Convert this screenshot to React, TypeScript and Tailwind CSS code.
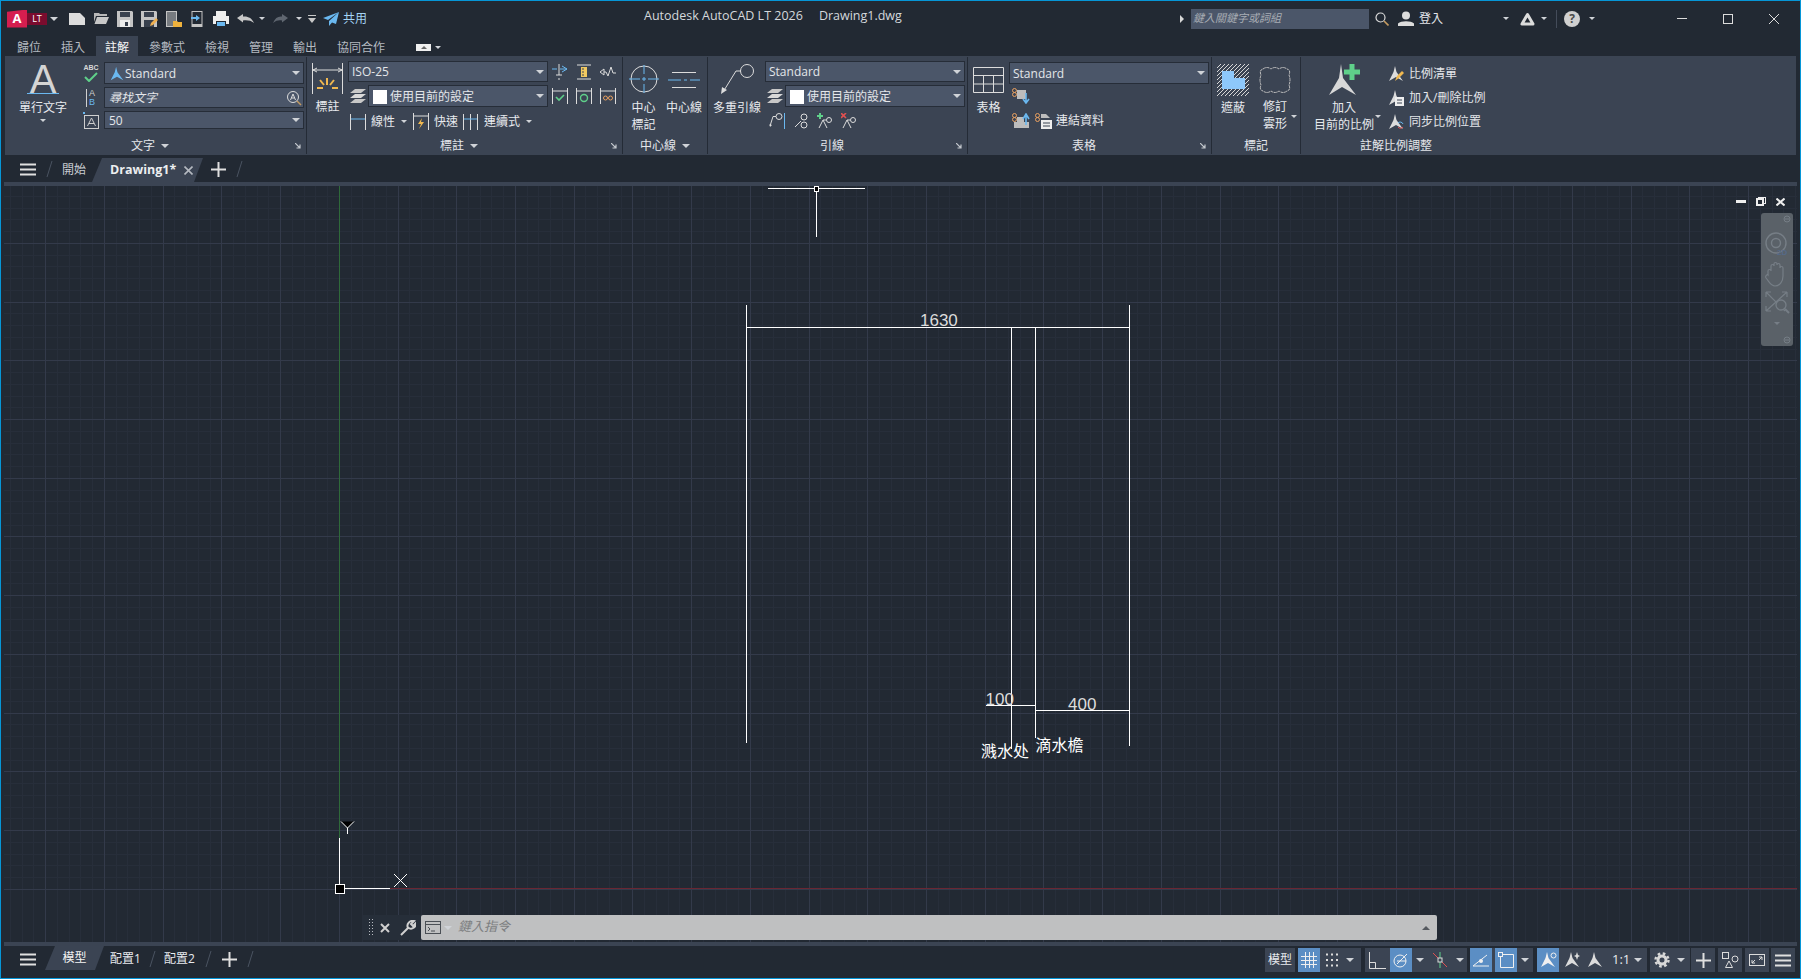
import React from "react";

type P = { className?: string };
const L = "#dcdcdc";
const B = "#6ab8f0";

function Svg({ w, h, className, children }: { w: number; h: number; className?: string; children: React.ReactNode }) {
  return (
    <svg width={w} height={h} viewBox={`0 0 ${w} ${h}`} fill="none" className={`shrink-0 ${className ?? ""}`}>
      {children}
    </svg>
  );
}

function Caret({ className }: P) {
  return <div className={`shrink-0 w-0 h-0 border-x-[4px] border-x-transparent border-t-[4px] border-t-[#d0d3d8] ${className ?? ""}`} />;
}
function SmallCaret({ className }: P) {
  return <div className={`shrink-0 w-0 h-0 border-x-[3px] border-x-transparent border-t-[3px] border-t-[#d0d3d8] ${className ?? ""}`} />;
}

function Slash({ className }: P) {
  return (
    <Svg w={7} h={18} className={className}>
      <path d="M6 1L1 17" stroke="#4a5361" />
    </Svg>
  );
}

function Burger({ className }: P) {
  return (
    <Svg w={16} h={13} className={className}>
      <path d="M0 1.5H16M0 6.5H16M0 11.5H16" stroke="#e0e0e0" strokeWidth="2" />
    </Svg>
  );
}

function Plus({ className }: P) {
  return (
    <Svg w={15} h={15} className={className}>
      <path d="M7.5 0V15M0 7.5H15" stroke="#e0e0e0" strokeWidth="2" />
    </Svg>
  );
}

function Floppy({ pencil }: { pencil?: boolean }) {
  return (
    <>
      <path d="M0 0H15L16 1V16H0Z" fill="#c4c4c4" />
      <rect x="3" y="1" width="10" height="5" fill="#39414e" />
      <rect x="3" y="9" width="10" height="7" fill={pencil ? "#39414e" : "#eeeeee"} />
      <rect x="8" y="11" width="3" height="4" fill="#39414e" />
      {pencil && <path d="M9 15L10 12L15 7L17 9L12 14Z" fill="#f0b050" />}
    </>
  );
}

function ScalePath({ fill = L }: { fill?: string }) {
  return <path d="M7 0L8.5 6L15 15L8 11L1 15L5.5 6Z" fill={fill} />;
}

function Scale({ fill = L, className }: { fill?: string; className?: string }) {
  return (
    <Svg w={16} h={16} className={className}>
      <ScalePath fill={fill} />
    </Svg>
  );
}

function Eight() {
  return (
    <>
      <circle cx="2.5" cy="2.5" r="2" stroke="#e8a060" />
      <circle cx="2.5" cy="6.5" r="2" stroke="#e8a060" />
    </>
  );
}

function Layers({ className }: P) {
  return (
    <Svg w={16} h={15} className={className}>
      <path d="M5 0H16L11 4H0Z" fill="#c8c8c8" />
      <path d="M5 5H16L11 9H0Z" fill="#d8d8d8" />
      <path d="M5 10H16L11 14H0Z" fill="#c8c8c8" />
    </Svg>
  );
}

function CornerArrow({ className }: P) {
  return (
    <Svg w={6} h={6} className={className}>
      <path d="M0 0L5 5M5 1.5V5H1.5" stroke="#c4c8ce" strokeWidth="1.2" />
    </Svg>
  );
}

function Combo({ className, children, caret = true }: { className: string; children?: React.ReactNode; caret?: boolean }) {
  return (
    <div className={`flex items-center shrink-0 pl-[2px] pt-px bg-[#4b5669] border border-[#262d38] text-[#e4e6ea] relative ${className}`}>
      {children}
      {caret && <Caret className="absolute right-[3px] top-1/2 -mt-[2px]" />}
    </div>
  );
}

function CurrentCombo({ className }: P) {
  return (
    <Combo className={`h-[22px] ${className ?? ""}`}>
      <div className="w-[14px] h-[14px] bg-white ml-[2px] mr-[3px]" />
      <span>使用目前的設定</span>
    </Combo>
  );
}

function Panel({ title, className, corner = true, caret = true, children }: {
  title: string;
  className: string;
  corner?: boolean;
  caret?: boolean;
  children: React.ReactNode;
}) {
  return (
    <div className={`shrink-0 my-px border-r border-[#242b36] relative ${className}`}>
      <div className="flex h-[80px]">{children}</div>
      <div className={`h-[17px] flex items-center justify-center gap-[6px] ${corner ? "pr-[11px]" : ""}`}>
        <span className="text-[#e4e6ea]">{title}</span>
        {caret && <Caret />}
      </div>
      {corner && <CornerArrow className="absolute right-[5px] top-[86px]" />}
    </div>
  );
}

function BigLabel({ children }: { children: React.ReactNode }) {
  return <div className="h-[17px] leading-[17px] text-center whitespace-nowrap">{children}</div>;
}

function SideRow({ icon, text }: { icon: React.ReactNode; text: string }) {
  return (
    <div className="flex items-center h-[24px] gap-[5px]">
      {icon}
      <span className="text-[#e4e6ea] whitespace-nowrap">{text}</span>
    </div>
  );
}

// 上方標題列
function TitleBar() {
  return (
    <div className="flex items-center h-[35px] shrink-0">
      <div className="flex items-center w-[643px] shrink-0">
        <div className="ml-[6px] flex items-center w-[40px] h-[18px]">
          <div className="w-[20px] h-[18px] bg-[#d51e4f] text-white text-[13px] font-bold flex items-center justify-center [clip-path:polygon(0_12%,100%_0,100%_100%,0_100%)]">A</div>
          <div className="w-[20px] h-[12px] bg-[#7a0c2e] text-white text-[9px] leading-[12px] text-center">LT</div>
        </div>
        <Caret className="ml-[3px]" />
        <Svg w={16} h={12} className="ml-[11px]"><path d="M0 0H11L16 5V12H0Z" fill={L} /></Svg>
        <Svg w={16} h={13} className="ml-[8px]">
          <path d="M1 1H6L7 2H14V4H3L1 10Z" fill="#b8b8b8" />
          <path d="M4 5H16L13 12H1.5Z" fill="#c8c8c8" />
        </Svg>
        <Svg w={16} h={16} className="ml-[8px]"><Floppy /></Svg>
        <Svg w={17} h={16} className="ml-[8px]"><Floppy pencil /></Svg>
        <Svg w={16} h={16} className="ml-[8px]">
          <rect x="0.5" y="0.5" width="10" height="15" fill="#777b80" stroke="#c4c4c4" />
          <path d="M7 10H11L12 11H16V16H7Z" fill="#efb23d" />
        </Svg>
        <Svg w={12} h={16} className="ml-[9px]">
          <rect x="1" y="0.5" width="10" height="15" stroke="#c4c4c4" />
          <rect x="1" y="13" width="10" height="2.5" fill="#c4c4c4" />
          <path d="M0 6H5V4L9 7L5 10V8H0Z" fill={B} />
        </Svg>
        <Svg w={16} h={16} className="ml-[10px]">
          <rect x="3" y="0" width="10" height="5" fill="#eeeeee" />
          <path d="M0 5H16V13H13V10H3V13H0Z" fill="#eeeeee" />
          <rect x="4" y="11" width="8" height="4" fill={B} />
        </Svg>
        <Svg w={17} h={9} className="ml-[8px]"><path d="M0 4L6 0V2.5C11 2 15 4 17 9C14 6.5 10 6 6 6.5V8.5Z" fill="#c8c8c8" /></Svg>
        <SmallCaret className="ml-[5px]" />
        <Svg w={15} h={9} className="ml-[8px]"><path d="M15 4L9 0V2.5C5 2 2 4 0 9C3 6.5 6 6 9 6.5V8.5Z" fill="#5f6670" /></Svg>
        <SmallCaret className="ml-[8px]" />
        <Svg w={8} h={8} className="ml-[6px]">
          <path d="M0 0.5H8" stroke="#c8c8c8" />
          <path d="M0 3H8L4 8Z" fill="#c8c8c8" />
        </Svg>
        <Svg w={16} h={14} className="ml-[7px]">
          <path d="M16 0L0 6L5 8ZM16 0L6 9L6 14L9 10.5L13 12Z" fill={B} />
        </Svg>
        <span className="ml-[4px] text-[#a4d4f4]">共用</span>
      </div>
      <div className="flex items-center w-[536px] shrink-0 -mt-[5px] text-[#d4d8dc] text-[12.5px] whitespace-nowrap">
        <span>Autodesk AutoCAD LT 2026</span>
        <span className="ml-[16px]">Drawing1.dwg</span>
      </div>
      <div className="flex items-center flex-1">
        <div className="shrink-0 w-0 h-0 border-y-[4px] border-y-transparent border-l-[4px] border-l-[#d8d8d8]" />
        <div className="ml-[7px] w-[178px] h-[20px] bg-[#4b5669] flex items-center pl-[2px] text-[11px] italic text-[#a8adb4]">鍵入關鍵字或詞組</div>
        <Svg w={14} h={14} className="ml-[6px]">
          <circle cx="5.5" cy="5.5" r="4.5" stroke={L} strokeWidth="1.2" />
          <path d="M9 9L13.5 13.5" stroke="#c49a60" strokeWidth="1.6" />
        </Svg>
        <Svg w={16} h={15} className="ml-[9px]">
          <circle cx="8" cy="4.5" r="4" fill={L} />
          <path d="M0 15V12.5C3 9.5 13 9.5 16 12.5V15Z" fill={L} />
        </Svg>
        <span className="ml-[5px] w-[24px] text-[#e4e6ea]">登入</span>
        <SmallCaret className="ml-[60px]" />
        <Svg w={15} h={14} className="ml-[11px]">
          <path d="M7.5 2.5L2 12H13Z" stroke={L} strokeWidth="3" strokeLinejoin="round" />
        </Svg>
        <SmallCaret className="ml-[6px]" />
        <div className="ml-[9px] w-px h-[18px] bg-[#444c5a]" />
        <div className="ml-[7px] w-[16px] h-[16px] rounded-full bg-[#d0d0d0] text-[#4a4a4a] text-[12px] font-bold leading-[16px] text-center">?</div>
        <SmallCaret className="ml-[9px]" />
        <Svg w={10} h={2} className="ml-[82px]"><rect width="10" height="1" fill={L} /></Svg>
        <Svg w={10} h={10} className="ml-[36px]"><rect x="0.5" y="0.5" width="9" height="9" stroke={L} /></Svg>
        <Svg w={10} h={10} className="ml-[36px]"><path d="M0 0L10 10M10 0L0 10" stroke={L} /></Svg>
      </div>
    </div>
  );
}

function RibbonTabs() {
  const tabs = ["歸位", "插入", "註解", "參數式", "檢視", "管理", "輸出", "協同合作"];
  return (
    <div className="flex items-stretch h-[20px] shrink-0 ml-[7px] gap-[2px]">
      {tabs.map((t) => (
        <div
          key={t}
          className={t === "註解"
            ? "px-[9px] pt-[3px] flex items-center bg-[#3b4453] text-[#f4f4f4]"
            : "px-[9px] pt-[3px] flex items-center text-[#b4b9c0]"}
        >
          {t}
        </div>
      ))}
      <div className="ml-[20px] self-center mt-[2px] w-[15px] h-[7px] bg-[#f0f0f0] flex items-center justify-center">
        <div className="w-0 h-0 border-x-[3px] border-x-transparent border-b-[3px] border-b-[#666]" />
      </div>
      <SmallCaret className="ml-[2px] mt-[2px] self-center" />
    </div>
  );
}

function Ribbon() {
  const hatch = [4, 8, 12, 16, 20, 24, 28, 32, 36, 40, 44, 48, 52, 56, 60];
  return (
    <div className="flex shrink-0 ml-[4px] w-[1791px] h-[99px] bg-[#3b4453] text-[#e8eaee]">
      {/* 文字 */}
      <Panel title="文字" className="w-[302px]">
        <div className="w-[76px] flex flex-col items-center">
          <div className="h-[37px] w-[32px] border-b border-[#6ab8f0] text-[#d4d4d4] text-[40px] leading-[44px] text-center font-['Liberation_Sans',sans-serif]">A</div>
          <div className="mt-[5px]"><BigLabel>單行文字</BigLabel></div>
          <SmallCaret className="mt-[3px]" />
        </div>
        <div className="flex flex-col pt-[5px] gap-[3px]">
          <div className="flex items-center">
            <div className="w-[23px] h-[18px] flex flex-col items-center pr-[3px] relative">
              <span className="text-[7px] leading-[7px] font-bold text-[#d8d8d8] font-['Liberation_Sans',sans-serif]">ABC</span>
              <Svg w={14} h={10} className="mt-px">
                <path d="M1 5L5 9L13 1" stroke="#5fd08a" strokeWidth="2" />
              </Svg>
            </div>
            <Combo className="w-[200px] h-[22px]">
              <Scale fill={B} className="ml-[2px] scale-90" />
              <span>Standard</span>
            </Combo>
          </div>
          <div className="flex items-center">
            <div className="w-[23px] flex flex-col pl-[5px] text-[9px] leading-[9px] font-['Liberation_Sans',sans-serif]">
              <span className="border-l border-[#d0d0d0] pl-[2px] text-[#d0d0d0]">A</span>
              <span className="border-l border-[#d0d0d0] pl-[2px] text-[#6ab8f0]">B</span>
            </div>
            <Combo caret={false} className="w-[200px] h-[21px] italic text-[#a8adb4]">
              <span className="ml-[2px]">尋找文字</span>
              <Svg w={16} h={16} className="absolute right-[1px] top-[2px]">
                <circle cx="7" cy="7" r="5.5" stroke={L} />
                <path d="M4.5 10L7 4L9.5 10M5.5 8H8.5" stroke={L} />
                <path d="M11 11L15 15" stroke="#c49a60" strokeWidth="1.5" />
              </Svg>
            </Combo>
          </div>
          <div className="flex items-center">
            <Svg w={17} h={17} className="ml-[2px] mr-[4px]">
              <rect x="1.5" y="3.5" width="14" height="13" stroke="#cfcfcf" />
              <rect x="0" y="0" width="2" height="2" fill={B} />
              <path d="M4.5 14L8.5 6L12.5 14M6 11.5H11" stroke="#cfcfcf" />
            </Svg>
            <Combo className="w-[200px] h-[18px]"><span className="ml-[2px]">50</span></Combo>
          </div>
        </div>
      </Panel>

      {/* 標註 */}
      <Panel title="標註" className="w-[316px]">
        <div className="w-[41px] flex flex-col items-center">
          <Svg w={31} h={32} className="mt-[6px]">
            <path d="M0.5 0V31M30.5 0V31" stroke={L} />
            <path d="M1 7H30M1 7L5 5M1 7L5 9M30 7L26 5M30 7L26 9" stroke={L} />
            <path d="M15 15V22M8 17L12 22M22 17L18 22M5 25H11M20 25H26" stroke="#f0b850" strokeWidth="2" />
          </Svg>
          <div className="mt-[3px]"><BigLabel>標註</BigLabel></div>
        </div>
        <div className="flex flex-col pt-[4px]">
          <div className="flex items-center">
            <Combo className="w-[200px] h-[21px]"><span className="ml-[1px]">ISO-25</span></Combo>
            <Svg w={16} h={16} className="ml-[4px]">
              <path d="M0 5H5M8 5H15M10 2L15 5L10 8" stroke={B} />
              <path d="M7 0V11M4 11H10M7 14V16" stroke={L} />
            </Svg>
            <Svg w={16} h={16} className="ml-[8px]">
              <path d="M1 1H15M1 15H15" stroke={L} />
              <rect x="5" y="3" width="6" height="10" fill="#f0c860" />
              <path d="M6 5H8M6 8H8M6 11H8" stroke="#3b4453" />
            </Svg>
            <Svg w={16} h={16} className="ml-[8px]">
              <path d="M0 8L4 5V11ZM4 8H6L8 12L11 3L13 9H16" stroke={L} />
            </Svg>
          </div>
          <div className="flex items-center mt-[3px]">
            <Layers className="ml-[2px] mr-[2px]" />
            <CurrentCombo className="w-[180px]" />
            <Svg w={16} h={16} className="ml-[4px]">
              <path d="M0.5 0V16M15.5 0V16M1 3H15" stroke={L} />
              <path d="M4 9L7 12L12 7" stroke="#5fd08a" strokeWidth="1.6" />
            </Svg>
            <Svg w={16} h={16} className="ml-[8px]">
              <path d="M0.5 0V16M15.5 0V16M1 3H15" stroke={L} />
              <circle cx="8" cy="10" r="3.5" stroke="#5fd08a" strokeWidth="1.4" />
            </Svg>
            <Svg w={16} h={16} className="ml-[8px]">
              <path d="M0.5 0V16M15.5 0V16M1 3H15" stroke={L} />
              <circle cx="5.5" cy="10" r="2" stroke="#e8a060" />
              <circle cx="10.5" cy="10" r="2" stroke="#e8a060" />
            </Svg>
          </div>
          <div className="flex items-center mt-[6px] ml-[2px] h-[17px]">
            <Svg w={16} h={16}><path d="M0.5 0V16M15.5 0V16" stroke={L} /><path d="M1 5H15" stroke={B} /></Svg>
            <span className="ml-[5px]">線性</span>
            <SmallCaret className="ml-[6px]" />
            <Svg w={16} h={17} className="ml-[6px]">
              <path d="M0.5 0V17M15.5 0V17M1 3H15" stroke={L} />
              <path d="M9 5L5 11H8L6 16L11 9H8Z" fill="#f0b850" />
            </Svg>
            <span className="ml-[5px]">快速</span>
            <Svg w={15} h={16} className="ml-[5px]">
              <path d="M0.5 0V16M7.5 0V16M14.5 0V16" stroke={L} />
              <path d="M1 5H14" stroke={B} />
            </Svg>
            <span className="ml-[6px]">連續式</span>
            <SmallCaret className="ml-[6px]" />
          </div>
        </div>
      </Panel>

      {/* 中心線 */}
      <Panel title="中心線" className="w-[85px]" corner={false}>
        <div className="w-[41px] flex flex-col items-center">
          <Svg w={30} h={28} className="mt-[8px]">
            <circle cx="15" cy="14" r="13" stroke={L} />
            <path d="M15 0V9M15 19V28M0 14H11M19 14H30" stroke={B} />
            <path d="M15 12V16M13 14H17" stroke={B} />
          </Svg>
          <div className="mt-[6px]">
            <BigLabel>中心</BigLabel>
            <BigLabel>標記</BigLabel>
          </div>
        </div>
        <div className="w-[40px] flex flex-col items-center">
          <Svg w={32} h={16} className="mt-[15px]">
            <path d="M4 0.5H28M4 15.5H28" stroke={L} />
            <path d="M0 8H13M16 8H19M22 8H32" stroke={B} />
          </Svg>
          <div className="mt-[11px]"><BigLabel>中心線</BigLabel></div>
        </div>
      </Panel>

      {/* 引線 */}
      <Panel title="引線" className="w-[260px]" caret={false}>
        <div className="ml-[4px] w-[50px] flex flex-col items-center">
          <Svg w={33} h={30} className="mt-[7px]">
            <circle cx="26" cy="7" r="6.5" stroke={L} />
            <path d="M20 7H15L2 28" stroke={L} />
            <path d="M0 30L1 23L6 26Z" fill={L} />
          </Svg>
          <div className="mt-[5px]"><BigLabel>多重引線</BigLabel></div>
        </div>
        <div className="ml-[3px] flex flex-col pt-[4px]">
          <Combo className="w-[200px] h-[21px]"><span className="ml-[1px]">Standard</span></Combo>
          <div className="flex items-center mt-[3px]">
            <Layers className="ml-[2px] mr-[2px]" />
            <CurrentCombo className="w-[180px]" />
          </div>
          <div className="flex items-center mt-[6px] ml-[4px] gap-[8px]">
            <Svg w={16} h={16}><circle cx="10" cy="3.5" r="3" stroke={L} /><path d="M7 3.5H4L1 13" stroke={L} /><path d="M1 14L0.5 11L3 12Z" fill={L} /><path d="M15.5 0V16" stroke={B} /></Svg>
            <Svg w={16} h={16}><circle cx="11" cy="4" r="3" stroke={L} /><circle cx="11" cy="12" r="3" stroke={L} /><path d="M8 8L2 14" stroke={L} /></Svg>
            <Svg w={16} h={16}><path d="M0 3H6M3 0V6" stroke="#5fd08a" strokeWidth="2" /><circle cx="12" cy="7" r="2.5" stroke={L} /><path d="M9 7H6L2 15M6 7L10 15" stroke={L} /></Svg>
            <Svg w={16} h={16}><path d="M0 0L5 5M5 0L0 5" stroke="#e05050" strokeWidth="1.6" /><circle cx="12" cy="7" r="2.5" stroke={L} /><path d="M9 7H6L2 15M6 7L10 15" stroke={L} /></Svg>
          </div>
        </div>
      </Panel>

      {/* 表格 */}
      <Panel title="表格" className="w-[244px]" caret={false}>
        <div className="ml-[2px] w-[37px] flex flex-col items-center">
          <Svg w={31} h={26} className="mt-[10px]">
            <path d="M0.5 0.5H30.5V25.5H0.5ZM0.5 8.5H30.5M0.5 17H30.5M10.5 8.5V25.5M20.5 8.5V25.5" stroke={L} />
          </Svg>
          <div className="mt-[6px]"><BigLabel>表格</BigLabel></div>
        </div>
        <div className="ml-[2px] flex flex-col pt-[5px]">
          <Combo className="w-[200px] h-[22px]"><span className="ml-[1px]">Standard</span></Combo>
          <Svg w={18} h={16} className="ml-[3px] mt-[4px]">
            <Eight />
            <rect x="5" y="2" width="9" height="9" fill="#bdbdbd" />
            <path d="M14 5V14M11 11L14 15L17 11" stroke={B} strokeWidth="1.6" />
          </Svg>
          <div className="flex items-center ml-[3px] mt-[8px]">
            <Svg w={18} h={16}>
              <Eight />
              <rect x="2" y="9" width="15" height="6" fill="#bdbdbd" />
              <rect x="5" y="4" width="7" height="6" fill="#bdbdbd" />
              <path d="M14 12V3M11 6L14 1L17 6" stroke={B} strokeWidth="1.6" />
            </Svg>
            <Svg w={17} h={16} className="ml-[5px]">
              <Eight />
              <path d="M6 1H11L15 5H6Z" fill="#bdbdbd" />
              <rect x="6" y="7" width="11" height="9" fill="#eeeeee" />
              <path d="M8 10H15M8 13H15" stroke="#3b4453" />
            </Svg>
            <span className="ml-[4px]">連結資料</span>
          </div>
        </div>
      </Panel>

      {/* 標記 */}
      <Panel title="標記" className="w-[89px]" corner={false} caret={false}>
        <div className="w-[42px] flex flex-col items-center">
          <Svg w={32} h={32} className="mt-[7px]">
            {hatch.map((h) => <path key={h} d={`M0 ${h}L${h} 0`} stroke="#d8d8d8" />)}
            <path d="M5 7H17V14H28V25H5Z" fill="#8ec8fb" />
          </Svg>
          <div className="mt-[3px]"><BigLabel>遮蔽</BigLabel></div>
        </div>
        <div className="w-[42px] flex flex-col items-center relative">
          <Svg w={32} h={26} className="mt-[10px]">
            <path d="M4 2Q8 -1 12 2Q16 -1 20 2Q24 -1 28 2Q32 3 30 8Q32 13 30 18Q32 23 28 24Q24 27 20 24Q16 27 12 24Q8 27 4 24Q0 23 2 18Q0 13 2 8Q0 3 4 2Z" stroke="#bdbdbd" strokeDasharray="3 0.6" />
          </Svg>
          <div className="mt-[5px]">
            <BigLabel>修訂</BigLabel>
            <BigLabel>雲形</BigLabel>
          </div>
          <SmallCaret className="absolute right-[-1px] top-[58px]" />
        </div>
      </Panel>

      {/* 註解比例調整 */}
      <Panel title="註解比例調整" className="w-[190px] border-r-0" corner={false} caret={false}>
        <div className="w-[86px] flex flex-col items-center relative">
          <Svg w={32} h={32} className="mt-[7px]">
            <path d="M13 0L15 14L28 31L14 23L1 31L11 14Z" fill="#d8d8d8" />
            <path d="M16 5.5H32V10.5H16ZM21.5 0H26.5V16H21.5Z" fill="#5fd08a" />
          </Svg>
          <div className="mt-[3px]">
            <BigLabel>加入</BigLabel>
            <BigLabel>目前的比例</BigLabel>
          </div>
          <SmallCaret className="absolute right-[6px] top-[58px]" />
        </div>
        <div className="ml-px flex flex-col pt-[5px]">
          <SideRow icon={<Svg w={16} h={16}><ScalePath /><path d="M7 15L9 10L14 5L16 7L11 12Z" fill="#f0b850" /></Svg>} text="比例清單" />
          <SideRow icon={<Svg w={16} h={16}><ScalePath /><rect x="7" y="7" width="9" height="9" fill="#eeeeee" /><path d="M9 10H14M9 13H14" stroke="#3b4453" /></Svg>} text="加入/刪除比例" />
          <SideRow icon={<Svg w={16} h={16}><ScalePath /><path d="M10 9A3 3 0 0 1 15 10" stroke={B} /><path d="M15 13A3 3 0 0 1 10 13" stroke="#e05050" /></Svg>} text="同步比例位置" />
        </div>
      </Panel>
    </div>
  );
}

function DocTabs() {
  return (
    <div className="flex items-center h-[27px] shrink-0 text-[#e8eaee]">
      <Burger className="ml-[19px] mt-px" />
      <Slash className="ml-[10px]" />
      <span className="ml-[9px] pt-[2px] text-[#c8ccd2]">開始</span>
      <div className="ml-[6px] self-end flex items-center w-[111px] h-[24px] pl-[18px] bg-[#3b4453] font-bold text-[#eceef0] text-[12.5px] [clip-path:polygon(10px_0,100%_0,calc(100%-9px)_100%,0_100%)]">
        <span>Drawing1*</span>
        <Svg w={9} h={9} className="ml-[8px]"><path d="M0.5 0.5L8.5 8.5M8.5 0.5L0.5 8.5" stroke="#b4b9c0" strokeWidth="1.6" /></Svg>
      </div>
      <Plus className="ml-[8px] mt-px" />
      <Slash className="ml-[10px]" />
    </div>
  );
}

// 繪圖區
function Drawing() {
  const step = 58.72 / 5;
  const xs = Array.from({ length: 160 }, (_, i) => ({ v: 339.3 + (i - 30) * step, major: (i - 30) % 5 === 0 })).filter((l) => l.v > 4 && l.v < 1797);
  const ys = Array.from({ length: 70 }, (_, i) => ({ v: 889.3 - i * step, major: i % 5 === 0 })).filter((l) => l.v > 186 && l.v < 942);
  const snap = (v: number) => Math.floor(v) + 0.5;
  return (
    <svg className="absolute inset-0 w-full h-full" viewBox="1 186 1799 756" shapeRendering="crispEdges">
      <rect x="4" y="186" width="1793" height="756" fill="#222933" />
      {xs.filter((l) => !l.major).map((l) => <path key={`x${l.v}`} d={`M${snap(l.v)} 186V942`} stroke="#272e3a" />)}
      {ys.filter((l) => !l.major).map((l) => <path key={`y${l.v}`} d={`M4 ${snap(l.v)}H1797`} stroke="#272e3a" />)}
      {xs.filter((l) => l.major).map((l) => <path key={`X${l.v}`} d={`M${snap(l.v)} 186V942`} stroke="#333a4a" />)}
      {ys.filter((l) => l.major).map((l) => <path key={`Y${l.v}`} d={`M4 ${snap(l.v)}H1797`} stroke="#333a4a" />)}
      {/* 座標軸 */}
      <path d="M339.5 186V838" stroke="#2f6a3a" />
      <path d="M390 888.5H1797" stroke="#6a2733" />
      <g stroke="#ffffff">
        <path d="M339.5 838V884M345 888.5H390" />
        <rect x="335.5" y="884.5" width="9" height="9" />
      </g>
      <g stroke="#ffffff" shapeRendering="auto">
        <path d="M341 821.5L347.5 828L354 821.5M347.5 828V834M394 874L407 887M407 874L394 887" />
      </g>
      {/* 十字游標 */}
      <g stroke="#ffffff">
        <path d="M768 188.5H865M816.5 192V237" />
        <rect x="814.5" y="186.5" width="4" height="5" />
      </g>
      {/* 標註 */}
      <g stroke="#ffffff">
        <path d="M746.5 305V743M1129.5 305V746M746 327.5H1129.5M1011.5 327V749M1035.5 327V738M986 705.5H1035.5M1035.5 710.5H1129.5" />
      </g>
      <g fill="#dcdcdc" fontFamily="'Liberation Sans', sans-serif" fontSize="17" shapeRendering="auto">
        <text x="920" y="326">1630</text>
        <text x="985.5" y="705">100</text>
        <text x="1068" y="710">400</text>
      </g>
      <g fill="#ffffff" fontFamily="'Noto Sans CJK SC', sans-serif" fontSize="16">
        <text x="981" y="757">溅水处</text>
        <text x="1035.5" y="751">滴水檐</text>
      </g>
    </svg>
  );
}

function ViewportControls() {
  return (
    <div className="absolute left-[1735px] top-[11px] flex items-center">
      <Svg w={10} h={3}><rect width="10" height="3" fill="#eeeeee" /></Svg>
      <Svg w={10} h={9} className="ml-[10px]">
        <rect x="2.5" y="0.5" width="7" height="6" stroke="#eeeeee" />
        <rect x="1" y="2" width="6" height="6" fill="#222933" stroke="#eeeeee" strokeWidth="2" />
      </Svg>
      <Svg w={9} h={8} className="ml-[10px]"><path d="M0.5 0.5L8.5 7.5M8.5 0.5L0.5 7.5" stroke="#eeeeee" strokeWidth="2" /></Svg>
    </div>
  );
}

function NavBar() {
  const c = "#767e86";
  return (
    <div className="absolute left-[1760px] top-[27px] w-[32px] h-[133px] rounded-[3px] bg-[#5a6168] flex flex-col items-center">
      <Svg w={32} h={133}>
        <circle cx="26" cy="6" r="3" stroke={c} />
        <path d="M24 6H28" stroke={c} />
        <circle cx="15" cy="30" r="10" stroke={c} strokeWidth="1.4" />
        <circle cx="15" cy="30" r="4.5" stroke={c} strokeWidth="1.4" />
        <path d="M7 62V58C7 56 10 56 10 58V53C10 51 13 51 13 53V51C13 49 16 49 16 51V52C16 50 19 50 19 52V55C19 53 22 53 22 55V63C22 68 19 73 14 73C10 73 9 70 5 65C4 63 6 61 7 62Z" stroke={c} strokeWidth="1.2" />
        <path d="M5 79L24 98M26 79L5 98M5 79H10M5 79V84M26 79H21M26 79V84M5 98V93M5 98H10" stroke={c} strokeWidth="1.2" />
        <circle cx="20" cy="92" r="5" fill="#5a6168" stroke={c} strokeWidth="1.3" />
        <path d="M24 96L28 100" stroke={c} strokeWidth="2" />
        <path d="M13 109H19L16 112Z" fill={c} />
        <circle cx="26" cy="127" r="3" stroke={c} />
        <path d="M24 127H28" stroke={c} />
      </Svg>
      <span className="absolute left-[16px] top-[34px] text-[8px] font-bold text-[#556a88] font-['Liberation_Sans',sans-serif]">2D</span>
    </div>
  );
}

function CommandLine() {
  return (
    <div className="absolute left-[362px] top-[729px] flex h-[25px] w-[1074px]">
      <div className="flex items-center w-[58px] bg-[#262e39]">
        <div className="ml-[5px] w-[5px] h-[19px] [background-image:radial-gradient(#b8bcc2_1px,transparent_1px)] [background-size:3px_3px]" />
        <Svg w={10} h={10} className="ml-[7px]"><path d="M1 1L9 9M9 1L1 9" stroke="#d0d0d0" strokeWidth="2" /></Svg>
        <Svg w={16} h={16} className="ml-[10px]">
          <path d="M1 15L9 7M8 8C6 4 10 0 14 1L11 4L13 6L16 3C16 7 12 10 9 8" stroke="#d0d0d0" strokeWidth="2" />
        </Svg>
      </div>
      <div className="flex-1 flex items-center bg-[#bfc0c1] rounded-[2px] relative">
        <Svg w={16} h={13} className="ml-[4px]">
          <rect x="0.5" y="0.5" width="15" height="12" stroke="#4a4f55" />
          <path d="M0 3.5H16" stroke="#4a4f55" />
          <path d="M3 6L5 8L3 10M6 10H10" stroke="#4a4f55" />
        </Svg>
        <Caret className="ml-[3px] border-t-[#4a4f55]" />
        <span className="ml-[6px] -mt-[2px] italic text-[13px] text-[#7c7e80]">鍵入指令</span>
        <div className="absolute right-[7px] top-[11px] w-0 h-0 border-x-[4px] border-x-transparent border-b-[4px] border-b-[#55595f]" />
      </div>
    </div>
  );
}

function StatusBox({ className, children }: { className?: string; children: React.ReactNode }) {
  return <div className={`flex items-center h-[24px] bg-[#3b4453] shrink-0 ${className ?? ""}`}>{children}</div>;
}
function On({ children }: { children: React.ReactNode }) {
  return <div className="w-[22px] h-[24px] bg-[#5b8ec4] flex items-center justify-center shrink-0">{children}</div>;
}

function StatusBar() {
  const w = "#f0f0f0";
  return (
    <div className="flex justify-between h-[32px] shrink-0 text-[#e8eaee]">
      <div className="flex items-center">
        <Burger className="ml-[19px] -mt-[6px]" />
        <div className="ml-[9px] self-start w-[59px] h-[24px] bg-[#3b4453] flex items-center justify-center text-[#f4f4f4] [clip-path:polygon(10px_0,100%_0,calc(100%-9px)_100%,0_100%)]">模型</div>
        <div className="flex items-center -mt-[6px] whitespace-nowrap">
          <span className="ml-[6px] w-[33px]">配置1</span>
          <Slash className="ml-[6px]" />
          <span className="ml-[8px] w-[33px]">配置2</span>
          <Slash className="ml-[8px]" />
          <Plus className="ml-[10px]" />
          <Slash className="ml-[10px]" />
        </div>
      </div>
      <div className="flex items-start pt-[2px] mr-[5px]">
        <StatusBox className="w-[30px] justify-center">模型</StatusBox>
        <StatusBox className="ml-[3px] w-[63px]">
          <On><Svg w={16} h={16}><path d="M0 4.5H16M0 8.5H16M0 12.5H16M4.5 0V16M8.5 0V16M12.5 0V16" stroke={w} /></Svg></On>
          <Svg w={14} h={14} className="ml-[5px]">
            <path d="M1 1.5H3M6 1.5H8M11 1.5H13M1 7H3M6 7H8M11 7H13M1 12.5H3M6 12.5H8M11 12.5H13" stroke={L} strokeWidth="2" />
          </Svg>
          <Caret className="ml-[7px]" />
        </StatusBox>
        <StatusBox className="ml-[4px] w-[102px]">
          <Svg w={17} h={17} className="ml-[4px]">
            <path d="M0.5 0V16.5H17M0.5 10.5H6.5V16.5" stroke={L} />
          </Svg>
          <div className="ml-[4px]">
            <On>
              <Svg w={16} h={16}>
                <circle cx="7" cy="9" r="6" stroke={w} />
                <path d="M4 12L14 2M4 9H13" stroke={w} />
              </Svg>
            </On>
          </div>
          <Caret className="ml-[4px]" />
          <Svg w={14} h={16} className="ml-[9px]">
            <path d="M0 1L14 15" stroke="#e05050" />
            <path d="M7 0V16" stroke="#5fd08a" />
            <rect x="5" y="6" width="4" height="4" fill="#3b4453" stroke={L} />
          </Svg>
          <Caret className="ml-[9px]" />
        </StatusBox>
        <StatusBox className="ml-[3px] w-[63px]">
          <On><Svg w={16} h={16}><path d="M0 14H16M0 14L14 3" stroke={w} /><circle cx="8" cy="9" r="2" fill={w} /></Svg></On>
          <div className="ml-[3px]">
            <On>
              <Svg w={16} h={16}>
                <path d="M2.5 4V15.5H15.5V2.5H4.5" stroke={w} />
                <rect x="0.5" y="0.5" width="4" height="4" stroke={w} />
              </Svg>
            </On>
          </div>
          <Caret className="ml-[4px]" />
        </StatusBox>
        <StatusBox className="ml-[4px] w-[110px]">
          <On>
            <Svg w={17} h={16}>
              <ScalePath fill={w} />
              <circle cx="13.5" cy="3.5" r="2.5" stroke={w} />
            </Svg>
          </On>
          <Svg w={16} h={16} className="ml-[5px]">
            <ScalePath />
            <path d="M13 0L14 3L16 4L14 5L13 8L12 5L10 4L12 3Z" fill={L} />
          </Svg>
          <Scale className="ml-[7px]" />
          <span className="ml-[9px] text-[13px] font-['Open_Sans',sans-serif]">1:1</span>
          <Caret className="ml-[4px]" />
        </StatusBox>
        <StatusBox className="ml-[3px] w-[40px]">
          <Svg w={16} h={16} className="ml-[4px]">
            <circle cx="8" cy="8" r="4" stroke="#d8d8d8" strokeWidth="3" />
            <circle cx="8" cy="8" r="6.5" stroke="#d8d8d8" strokeWidth="2.4" strokeDasharray="2.6 2.5" />
          </Svg>
          <Caret className="ml-[7px]" />
        </StatusBox>
        <StatusBox className="ml-px w-[24px] justify-center">
          <Plus />
        </StatusBox>
        <StatusBox className="ml-[3px] w-[24px] justify-center">
          <Svg w={17} h={17}>
            <rect x="0.5" y="0.5" width="6" height="6" stroke={L} />
            <circle cx="13" cy="7" r="3" stroke={L} />
            <path d="M7 9L3.5 15.5H10.5Z" stroke={L} />
          </Svg>
        </StatusBox>
        <StatusBox className="ml-[3px] w-[24px] justify-center">
          <Svg w={16} h={12}>
            <rect x="0.5" y="0.5" width="15" height="11" stroke={L} />
            <path d="M3 9L6 6M3 6V9H6M13 3L10 6M10 3H13V6" stroke={L} />
          </Svg>
        </StatusBox>
        <StatusBox className="ml-[2px] w-[24px] justify-center">
          <Burger />
        </StatusBox>
      </div>
    </div>
  );
}

export default function App() {
  return (
    <div className="w-[1801px] h-[979px] bg-[#222933] border border-[#0696d7] flex flex-col overflow-hidden text-[12px] font-['Open_Sans','Noto_Sans_CJK_TC',sans-serif]">
      <TitleBar />
      <RibbonTabs />
      <Ribbon />
      <DocTabs />
      <div className="h-[4px] ml-[3px] mr-[3px] bg-[#3b4453] shrink-0" />
      <div className="relative flex-1">
        <Drawing />
        <ViewportControls />
        <NavBar />
        <CommandLine />
      </div>
      <div className="h-[4px] ml-[3px] mr-[3px] bg-[#3b4453] shrink-0" />
      <StatusBar />
    </div>
  );
}
